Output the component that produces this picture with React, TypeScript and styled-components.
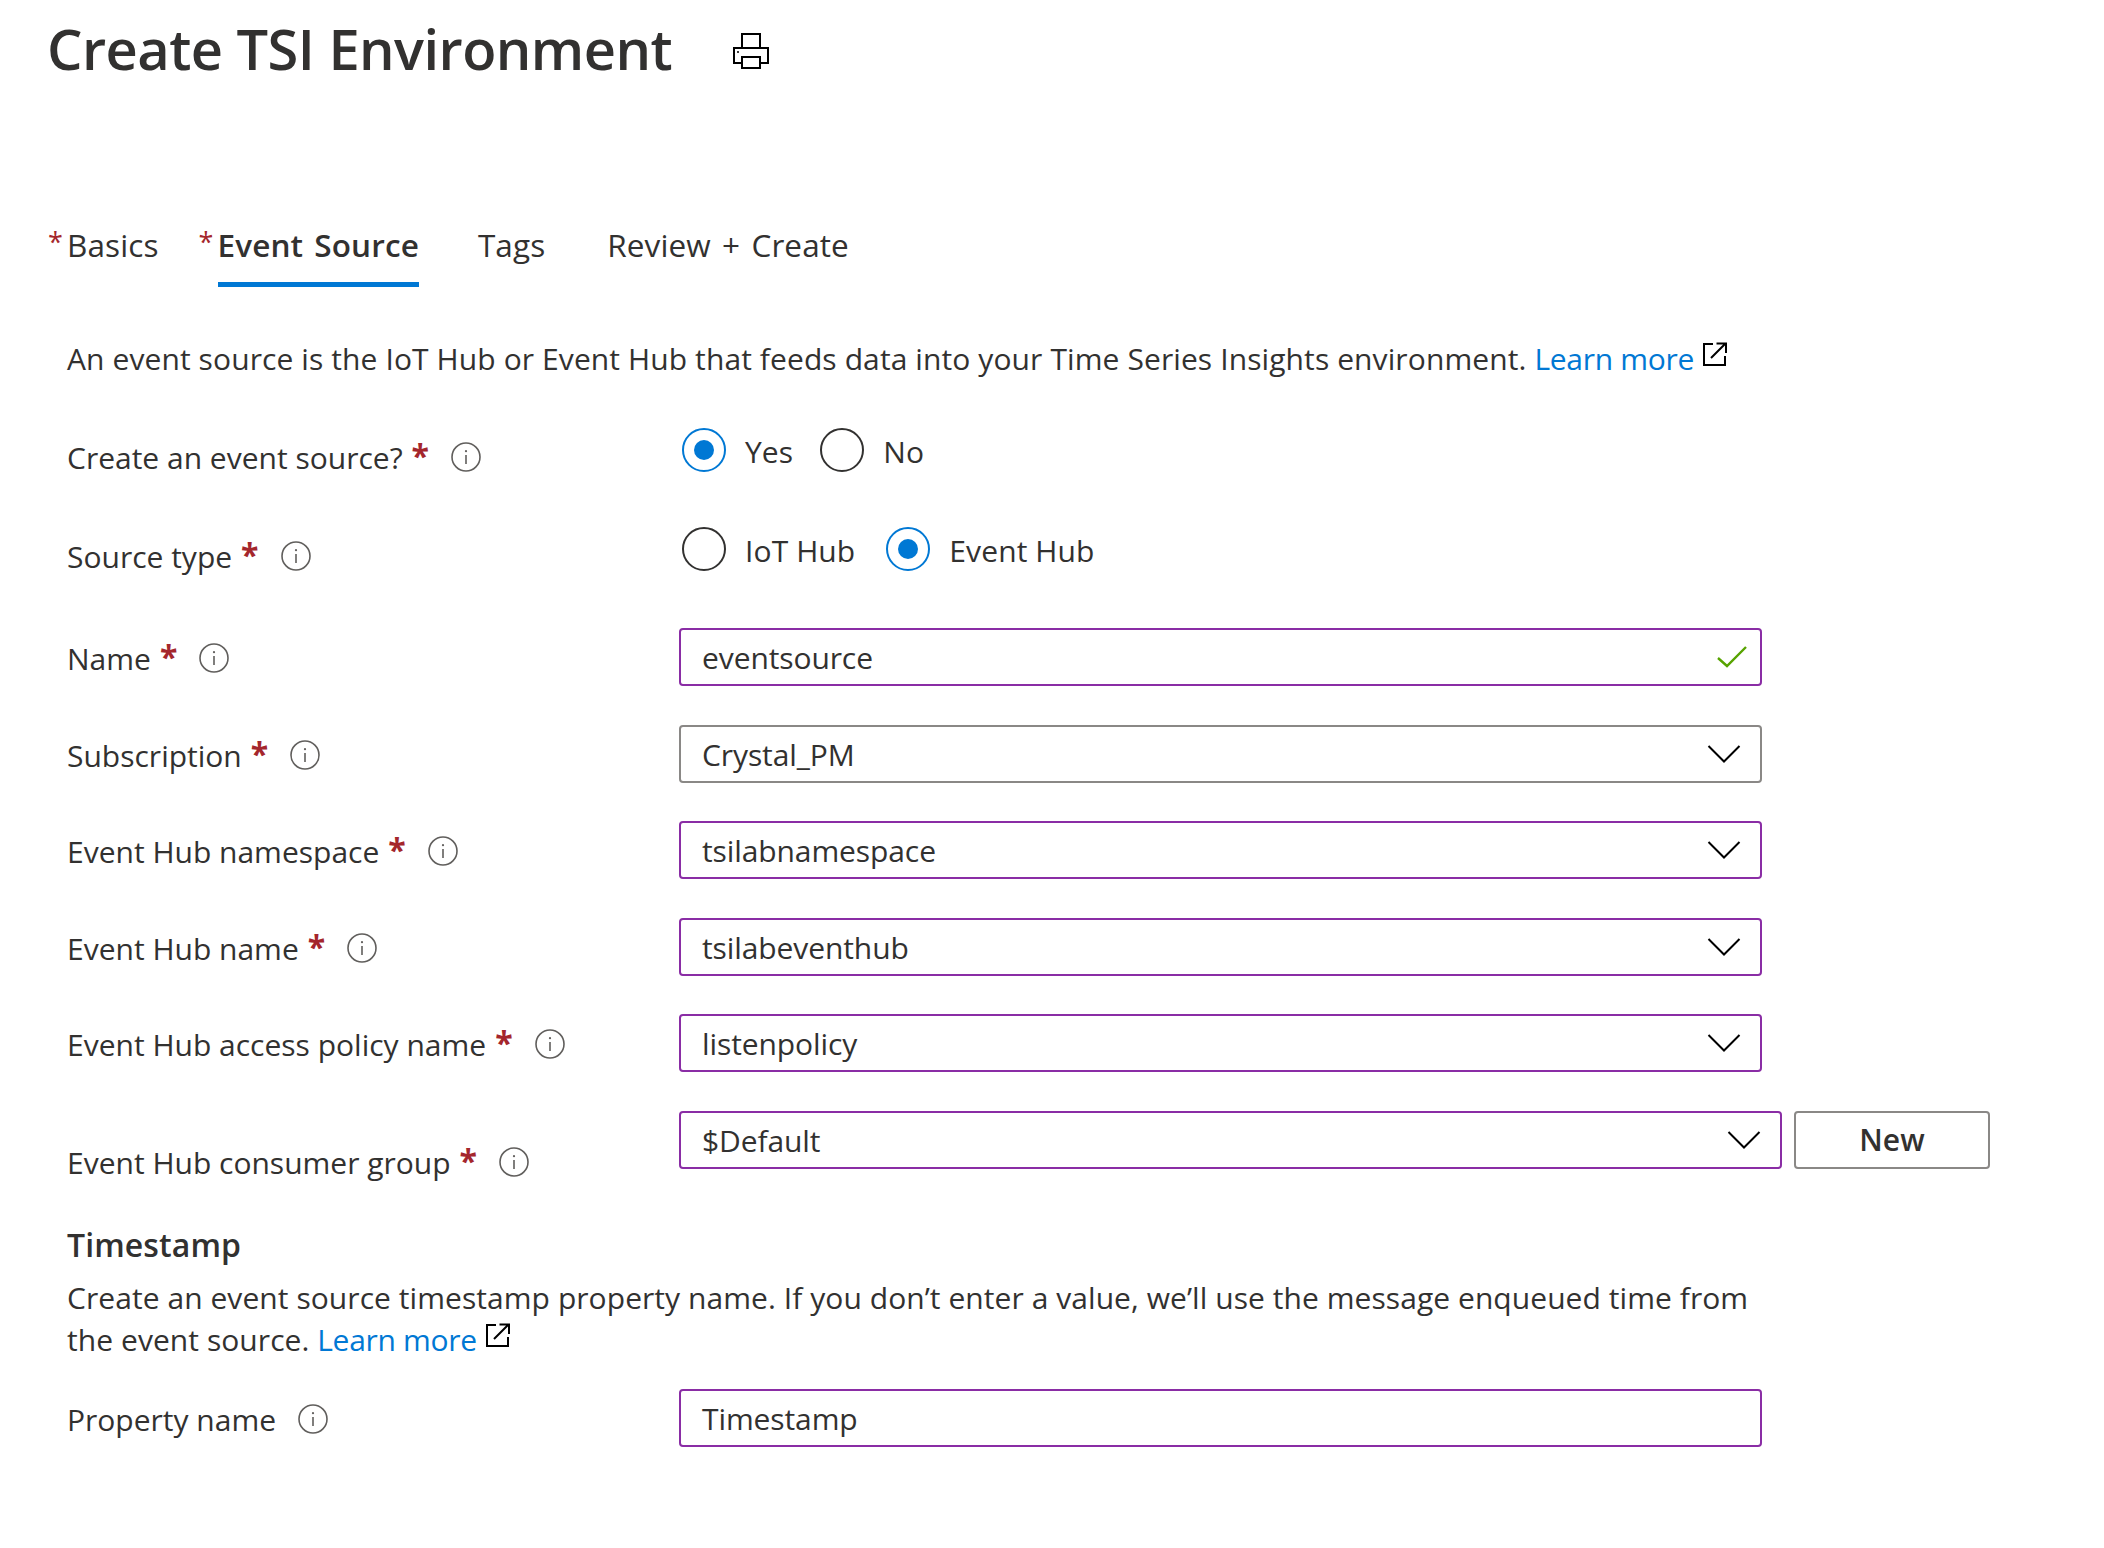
import React from "react";
import styled, { createGlobalStyle } from "styled-components";

const Global = createGlobalStyle`
  html, body { margin: 0; padding: 0; background: #fff; }
  body { font-family: "Open Sans", "Noto Sans", "Liberation Sans", sans-serif; color: #323130; }
`;

const Page = styled.div`
  width: 2104px;
  height: 1548px;
  overflow: hidden;
  font-size: 30px;
  letter-spacing: 0.1px;
`;

const Header = styled.header`
  display: flex;
  align-items: center;
  height: 96px;
  padding-left: 47px;
`;

const Title = styled.h1`
  margin: 0;
  width: 686px;
  font-size: 56px;
  line-height: 96px;
  font-weight: 600;
  letter-spacing: -0.55px;
  color: #323130;
`;

const PrintIcon = styled.svg`
  width: 36px;
  height: 36px;
  display: block;
  flex: none;
  margin-top: 6px;
`;

const Tabs = styled.nav`
  display: flex;
  align-items: flex-start;
  margin-top: 129px;
  padding-left: 48px;
  height: 62px;
  font-size: 31.5px;
  letter-spacing: 0.1px;
  word-spacing: 3px;
`;

const Tab = styled.div<{ $gap?: number }>`
  display: flex;
  margin-right: ${(p) => p.$gap ?? 40}px;
`;

const TabStar = styled.span`
  width: 19px;
  color: #a4262c;
  font-size: 27px;
  line-height: 34px;
`;

const TabLabel = styled.span<{ $active?: boolean }>`
  height: 62px;
  line-height: 40px;
  box-sizing: border-box;
  font-weight: ${(p) => (p.$active ? 600 : 400)};
  border-bottom: 5px solid ${(p) => (p.$active ? "#0078d4" : "transparent")};
`;

const Intro = styled.p`
  margin: 52px 0 0 67px;
  line-height: 40px;
  height: 40px;
  white-space: nowrap;
`;

const Link = styled.a`
  color: #0078d4;
  text-decoration: none;
  letter-spacing: -0.3px;
`;

const External = styled.svg`
  display: inline-block;
  width: 24px;
  height: 24px;
  margin-left: 9px;
  vertical-align: 4px;
`;

const Form = styled.div`
  padding-left: 67px;
`;

const Row = styled.div<{ $top: number; $height?: number }>`
  display: grid;
  grid-template-columns: 612px 1fr;
  grid-template-rows: ${(p) => p.$height ?? 58}px;
  align-items: center;
  margin-top: ${(p) => p.$top}px;
`;

const Label = styled.label<{ $drop?: number }>`
  display: flex;
  align-items: center;
  white-space: nowrap;
  padding-top: ${(p) => p.$drop ?? 4}px;
  line-height: 40px;
  letter-spacing: 0;
`;

const Star = styled.span`
  color: #a4262c;
  font-weight: 700;
  margin-left: 9px;
  font-size: 32px;
  line-height: 40px;
  height: 40px;
  position: relative;
  top: -2px;
`;

const InfoIcon = styled.svg`
  width: 30px;
  height: 30px;
  margin-left: 22px;
  margin-top: -2px;
  flex: none;
`;

const Radios = styled.div`
  display: flex;
  align-items: center;
  padding-left: 3px;
`;

const RadioItem = styled.div<{ $gap: number }>`
  display: flex;
  align-items: center;
  margin-right: ${(p) => p.$gap}px;
`;

const RadioCircle = styled.span<{ $on?: boolean }>`
  width: 44px;
  height: 44px;
  box-sizing: border-box;
  border-radius: 50%;
  border: 2px solid ${(p) => (p.$on ? "#0078d4" : "#323130")};
  display: flex;
  align-items: center;
  justify-content: center;
  margin-right: 19px;
  flex: none;
  &::after {
    content: "";
    display: ${(p) => (p.$on ? "block" : "none")};
    width: 20px;
    height: 20px;
    border-radius: 50%;
    background: #0078d4;
  }
`;

const RadioText = styled.span`
  line-height: 44px;
  padding-top: 3px;
`;

const FieldWrap = styled.div`
  display: flex;
  gap: 12px;
`;

const Field = styled.div<{ $width: number; $gray?: boolean }>`
  width: ${(p) => p.$width}px;
  height: 58px;
  box-sizing: border-box;
  border: 2px solid ${(p) => (p.$gray ? "#8a8886" : "#8a2da5")};
  border-radius: 4px;
  display: flex;
  align-items: center;
  justify-content: space-between;
  padding: 0 19px 0 21px;
  flex: none;
`;

const FieldValue = styled.span`
  line-height: 40px;
  padding-top: 2px;
  letter-spacing: -0.1px;
`;

const Chevron = styled.svg`
  width: 34px;
  height: 20px;
  flex: none;
`;

const Check = styled.svg`
  width: 30px;
  height: 24px;
  flex: none;
  margin-right: -6px;
`;

const NewButton = styled.button`
  width: 196px;
  height: 58px;
  box-sizing: border-box;
  background: #fff;
  border: 2px solid #8a8886;
  border-radius: 4px;
  color: #323130;
  font: inherit;
  font-weight: 600;
  letter-spacing: inherit;
  padding: 0 0 2px;
`;

const Heading = styled.h2`
  margin: 54px 0 0;
  font-size: 32px;
  font-weight: 600;
  line-height: 44px;
`;

const Description = styled.p`
  margin: 10px 0 0;
  line-height: 42px;
  white-space: nowrap;
  letter-spacing: 0.06px;
`;

const Info = () => (
  <InfoIcon viewBox="0 0 30 30" fill="none">
    <circle cx="15" cy="15" r="14" stroke="#605e5c" strokeWidth="1.6" />
    <path d="M15 13v9" stroke="#605e5c" strokeWidth="1.6" />
    <circle cx="15" cy="9.2" r="1.1" fill="#605e5c" />
  </InfoIcon>
);

const Ext = () => (
  <External viewBox="0 0 24 24" fill="none">
    <path d="M10 2H1v21h21v-9" stroke="#000" strokeWidth="2" />
    <path d="M8 16 22.500 1.500M13.500 1.500h9.500v9.500" stroke="#000" strokeWidth="2" />
  </External>
);

const Down = () => (
  <Chevron viewBox="0 0 34 20" fill="none">
    <path d="M1.500 2 17 17.500 32.500 2" stroke="#000" strokeWidth="2" />
  </Chevron>
);

const FieldLabel = ({ text, required = true, drop }: { text: string; required?: boolean; drop?: number }) => (
  <Label $drop={drop}>
    {text}
    {required && <Star>*</Star>}
    <Info />
  </Label>
);

const Dropdown = ({ value, width = 1083, gray }: { value: string; width?: number; gray?: boolean }) => (
  <Field $width={width} $gray={gray}>
    <FieldValue>{value}</FieldValue>
    <Down />
  </Field>
);

export default function App() {
  return (
    <Page>
      <Global />
      <Header>
        <Title>Create TSI Environment</Title>
        <PrintIcon viewBox="0 0 36 36" fill="none">
          <path d="M9 15V1h18v14" stroke="#000" strokeWidth="2" />
          <path d="M9 30H1V15h34v15h-8" stroke="#000" strokeWidth="2" />
          <path d="M9 24h18v11H9z" stroke="#000" strokeWidth="2" />
          <circle cx="5" cy="19" r="1" fill="#000" />
        </PrintIcon>
      </Header>
      <Tabs>
        <Tab>
          <TabStar>*</TabStar>
          <TabLabel>Basics</TabLabel>
        </Tab>
        <Tab>
          <TabStar>*</TabStar>
          <TabLabel $active>Event Source</TabLabel>
        </Tab>
        <Tab $gap={43}>
          <TabStar />
          <TabLabel>Tags</TabLabel>
        </Tab>
        <Tab>
          <TabStar />
          <TabLabel>Review + Create</TabLabel>
        </Tab>
      </Tabs>
      <Intro>
        An event source is the IoT Hub or Event Hub that feeds data into your Time Series Insights environment.{" "}
        <Link>Learn more</Link>
        <Ext />
      </Intro>
      <Form>
        <Row $top={49} $height={44}>
          <FieldLabel text="Create an event source?" drop={16} />
          <Radios>
            <RadioItem $gap={27}>
              <RadioCircle $on />
              <RadioText>Yes</RadioText>
            </RadioItem>
            <RadioItem $gap={27}>
              <RadioCircle />
              <RadioText>No</RadioText>
            </RadioItem>
          </Radios>
        </Row>
        <Row $top={55} $height={44}>
          <FieldLabel text="Source type" drop={16} />
          <Radios>
            <RadioItem $gap={31}>
              <RadioCircle />
              <RadioText>IoT Hub</RadioText>
            </RadioItem>
            <RadioItem $gap={31}>
              <RadioCircle $on />
              <RadioText>Event Hub</RadioText>
            </RadioItem>
          </Radios>
        </Row>
        <Row $top={57}>
          <FieldLabel text="Name" />
          <Field $width={1083}>
            <FieldValue>eventsource</FieldValue>
            <Check viewBox="0 0 30 24" fill="none">
              <path d="M1 13l9 8L29 2" stroke="#57a300" strokeWidth="2.400" />
            </Check>
          </Field>
        </Row>
        <Row $top={39}>
          <FieldLabel text="Subscription" />
          <Dropdown value="Crystal_PM" gray />
        </Row>
        <Row $top={38}>
          <FieldLabel text="Event Hub namespace" />
          <Dropdown value="tsilabnamespace" />
        </Row>
        <Row $top={39}>
          <FieldLabel text="Event Hub name" />
          <Dropdown value="tsilabeventhub" />
        </Row>
        <Row $top={38}>
          <FieldLabel text="Event Hub access policy name" />
          <Dropdown value="listenpolicy" />
        </Row>
        <Row $top={39}>
          <FieldLabel text="Event Hub consumer group" drop={46} />
          <FieldWrap>
            <Dropdown value="$Default" width={1103} />
            <NewButton>New</NewButton>
          </FieldWrap>
        </Row>
        <Heading>Timestamp</Heading>
        <Description>
          Create an event source timestamp property name. If you don’t enter a value, we’ll use the message enqueued time from
          <br />
          the event source. <Link>Learn more</Link>
          <Ext />
        </Description>
        <Row $top={28}>
          <FieldLabel text="Property name" required={false} />
          <Field $width={1083}>
            <FieldValue>Timestamp</FieldValue>
          </Field>
        </Row>
      </Form>
    </Page>
  );
}
